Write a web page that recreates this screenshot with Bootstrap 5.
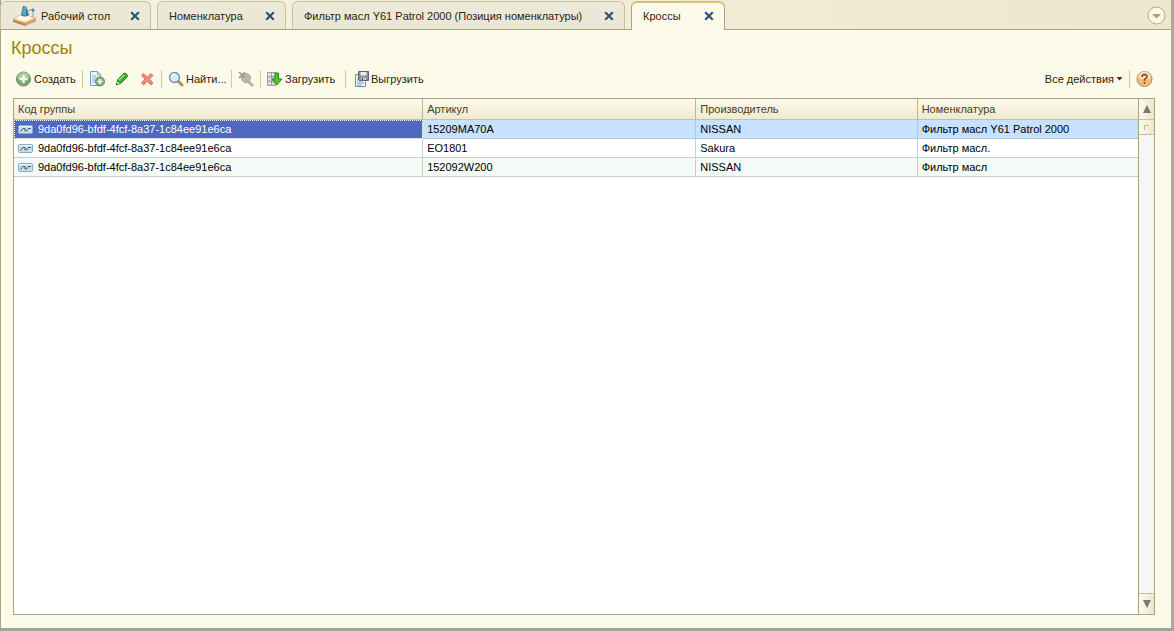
<!DOCTYPE html>
<html lang="ru">
<head>
<meta charset="utf-8">
<meta name="viewport" content="width=device-width, initial-scale=1">
<title>Кроссы</title>
<link href="https://cdn.jsdelivr.net/npm/bootstrap@5.3.0/dist/css/bootstrap.min.css" rel="stylesheet">
<style>
  :root { --line: #a9a37e; --page: #fcfae9; }
  body { font: 11px/14px "Liberation Sans", Arial, sans-serif; color: #2e2408; background: var(--page); }
  .app-window { border: 1px solid var(--line); border-width: 0 3px 3px 1px; border-right-color: #aaa99f; border-bottom-color: #a3a39c; background: var(--page); }
  .tab-strip { height: 30px; padding-top: 1px; background: linear-gradient(90deg, #f8f3de, #ede7d0); border-bottom: 1px solid var(--line); gap: 6px; }
  .doc-tab { height: 28px; padding: 0 10px 0 11px; border: 1px solid #c5c0a0; border-bottom: 0; border-radius: 6px 6px 0 0; background: linear-gradient(#edeada, #e9e6d6); }
  .doc-tab a { color: inherit; text-decoration: none; white-space: nowrap; }
  .doc-tab.current { height: 29px; margin-bottom: -1px; padding-bottom: 1px; background: var(--page); border-color: var(--line); border-top: 2px solid #d9c36b; }
  .tab-desktop { width: 151px; margin-left: -1px; }
  .tab-items { width: 129px; }
  .tab-position { width: 333px; }
  .tab-cross { width: 94px; }
  .plain { border: 0; background: none; padding: 0; color: inherit; display: inline-flex; align-items: center; white-space: nowrap; }
  .plain svg { flex: none; }
  .tab-menu { margin: 0 5px 4px auto; }
  h1 { font-size: 18px; line-height: 20px; color: #a08400; margin: 8px 0 0 10px; }
  .tool-row { margin: 11px 18px 0 14px; height: 20px; }
  .tool-row .plain { gap: 2px; height: 20px; }
  .rule { width: 1px; height: 18px; margin: 0 6px; background: #cdc8aa; flex: none; }
  .step { margin-left: 9px; }
  .b-create { width: 61px; } .b-find { width: 57px; } .b-load { width: 72px; }
  .grid-box { margin: 9px 16px 13px 12px; border: 1px solid var(--line); background: #fff; min-height: 0; }
  .cross-table { table-layout: fixed; width: 100%; margin: 0; border-collapse: separate; border-spacing: 0; color: #000; }
  .cross-table th { height: 21px; padding: 0 4px; font-weight: 400; color: #4c3e10; background: linear-gradient(#fbf9ea, #f0ead2); border-right: 1px solid #bdb68f; border-bottom: 1px solid #c5c0a0; }
  .cross-table td { height: 19px; padding: 0 4px; border-right: 1px solid #c5d0cc; border-bottom: 1px solid #c5d0cc; white-space: nowrap; overflow: hidden; }
  .cross-table th:last-child, .cross-table td:last-child { border-right: 0; }
  .cross-table tr.picked td { background: #c8e1ff; border-color: #b4c8dc; }
  .cross-table tr.picked td:first-child { background: #4f68c0; color: #fff; outline: 1px dotted #fff; outline-offset: -1px; }
  .cross-table tr.shaded td { background: #f4faf6; }
  .c-group { width: 36.4%; } .c-art { width: 24.3%; } .c-maker { width: 19.7%; }
  .row-icon { margin-right: 5px; vertical-align: -1px; }
  .scroller { width: 16px; border-left: 1px solid var(--line); background: #f8f6f2; flex: none; }
  .scroller .plain { justify-content: center; height: 21px; background: linear-gradient(90deg, #fcfaec, #ece7cc); border-bottom: 1px solid #c5c0a0; }
  .scroller .plain.down { border: 0; border-top: 1px solid #c5c0a0; }
  .thumb { height: 15px; background: linear-gradient(90deg, #fcfaec, #ece7cc); border-bottom: 1px solid #c5c0a0; }
</style>
</head>
<body>
<svg class="d-none" aria-hidden="true">
  <symbol id="cross" viewBox="0 0 10 10"><path d="M1.2 1.2 8.8 8.8M8.8 1.2 1.2 8.8" stroke="#2b5576" stroke-width="2.2"/></symbol>
  <symbol id="wave" viewBox="0 0 15 9"><rect x=".5" y=".5" width="14" height="8" rx="1" fill="#c9deed" stroke="#8ba9c0"/><path d="M1 1.5h13" stroke="#edf6fc"/><path d="M2.5 6.500 5 3.500h2v2.500h1.500l2-2.500h2.500" fill="none" stroke="#38546c"/></symbol>
</svg>
<div class="app-window d-flex flex-column min-vh-100">
  <nav class="tab-strip d-flex align-items-end" aria-label="Открытые окна">
    <div class="doc-tab tab-desktop d-flex align-items-center justify-content-between">
      <a href="#" class="d-flex align-items-center"><svg width="25" height="22" viewBox="0 0 25 22" class="me-1">
        <path d="M1 14v3l12 4 11-5v-3z" fill="#b98a58"/><path d="M1 14 10 9l14 4-11 5z" fill="#f6dfb8" stroke="#dfba84" stroke-width=".7"/><path d="m13 18 11-5v3l-11 5z" fill="#d3a36b"/><ellipse cx="12" cy="13" rx="7" ry="2.500" fill="#fff8e4"/><path d="M11 1h3l3 9q-4 3-8 0z" fill="#28799d"/><path d="M12 1h2l0 10-4-2z" fill="#59add0"/><path d="M15 6l6-2v8" fill="none" stroke="#7d9fb2" stroke-width="1"/><circle cx="21" cy="5" r="1.600" fill="#4386a8"/></svg>Рабочий стол</a>
      <button class="plain" aria-label="Закрыть"><svg width="10" height="10"><use href="#cross"/></svg></button>
    </div>
    <div class="doc-tab tab-items d-flex align-items-center justify-content-between"><a href="#">Номенклатура</a><button class="plain" aria-label="Закрыть"><svg width="10" height="10"><use href="#cross"/></svg></button></div>
    <div class="doc-tab tab-position d-flex align-items-center justify-content-between"><a href="#">Фильтр масл Y61 Patrol 2000 (Позиция номенклатуры)</a><button class="plain" aria-label="Закрыть"><svg width="10" height="10"><use href="#cross"/></svg></button></div>
    <div class="doc-tab current tab-cross d-flex align-items-center justify-content-between"><a href="#" aria-current="page">Кроссы</a><button class="plain" aria-label="Закрыть"><svg width="10" height="10"><use href="#cross"/></svg></button></div>
    <button class="plain tab-menu" aria-label="Список окон"><svg width="19" height="19" viewBox="0 0 19 19"><circle cx="9.500" cy="9.500" r="8.500" fill="#fbf8e6" stroke="#b1a878"/><path d="M5 8h9l-4.500 4.500z" fill="#aaa071"/></svg></button>
  </nav>

  <main class="d-flex flex-column flex-grow-1">
    <h1 class="fw-normal">Кроссы</h1>
    <div class="tool-row d-flex align-items-center" role="toolbar" aria-label="Действия">
      <button class="plain b-create"><svg width="17" height="16" viewBox="0 0 17 16"><circle cx="8.500" cy="8" r="7" fill="#79ad6e" stroke="#628e5c"/><path d="M2.500 7a6 6 0 0 1 12 0q-6 3-12 0" fill="#a3cb98"/><path d="M8.500 4v8m-4-4h8" stroke="#fff" stroke-width="2.400"/></svg>Создать</button>
      <span class="rule"></span>
      <button class="plain" aria-label="Скопировать"><svg width="16" height="16" viewBox="0 0 16 16"><path d="M1.500.5h7l3 3v11h-10z" fill="#eef4fb" stroke="#7a9bbd"/><path d="M8.500 1v3h3M3 5h4M3 7h6M3 9h4M3 11h4" fill="none" stroke="#91afce"/><circle cx="11" cy="10.500" r="4.500" fill="#82b577" stroke="#5d8f59"/><path d="M11 8v5m-2.500-2.500h5" stroke="#fff" stroke-width="1.600"/></svg></button>
      <button class="plain step" aria-label="Изменить"><svg width="16" height="16" viewBox="0 0 16 16"><path d="m2.500 13.500 1-4.500 6-6.500q1.500-1 3 .5t.5 3l-6.500 6.500z" fill="#35b326" stroke="#1b7c18"/><path d="m5 9 5.500-5.500" stroke="#93e67c" stroke-width="1.600"/><path d="m2.500 13.500.7-3 2.300 2.300z" fill="#f4dfa6"/><path d="m2 14 .5-1.800 1.300 1.300z" fill="#222"/></svg></button>
      <button class="plain step" aria-label="Удалить"><svg width="16" height="16" viewBox="0 0 16 16"><path d="m2.500 4.500 2-2L8.300 6 12 2.500l2 2L10.500 8l3.500 4-2 2-3.700-3.700L4.500 14l-2-2L6 8z" fill="#f28d80" stroke="#d4574c" stroke-width=".8"/></svg></button>
      <span class="rule"></span>
      <button class="plain b-find"><svg width="16" height="16" viewBox="0 0 16 16"><path d="m10 10 4 4" stroke="#b88965" stroke-width="3" stroke-linecap="round"/><circle cx="6.500" cy="6.500" r="5" fill="#d7eafa" stroke="#788baa" stroke-width="1.300"/><path d="M3.500 6a3.500 3.500 0 0 1 3.500-3" fill="none" stroke="#fff" stroke-width="1.500"/></svg>Найти...</button>
      <span class="rule"></span>
      <button class="plain" aria-label="Отменить поиск"><svg width="16" height="16" viewBox="1 0 16 16"><path d="m11 10 4 4" stroke="#b5b2a8" stroke-width="3" stroke-linecap="round"/><circle cx="9" cy="7" r="4.500" fill="#bbb8b0" stroke="#a5a39d"/><path d="m2 1 6 6m0-6L2 7" stroke="#9b9995" stroke-width="1.700"/></svg></button>
      <span class="rule"></span>
      <button class="plain b-load"><svg width="16" height="16" viewBox="1 0 16 16"><path d="M1.500 1.500h8v13h-8zM1.500 5.800h8m-8 4.400h8M5.500 1.500v13" fill="#d7d8da" stroke="#9b9da2"/><path d="M2.500 3.500h2m2 0h2m-6 4.500h2m2 0h2m-6 4.500h2" stroke="#f5f5f5"/><path d="M9 2h3.500v6H16l-5.300 6L6 8h3z" fill="#50c928" stroke="#258413"/></svg>Загрузить</button>
      <span class="rule"></span>
      <button class="plain"><svg width="17" height="16" viewBox="-2 0 17 16"><path d="M1.500 3.500h10v12h-10z" fill="#edf4fb" stroke="#728eb0"/><path d="M3 8h2m-2 2h6m-6 2h7m-7 2h5" stroke="#83a3c4"/><path d="M4.500.5h10v9h-9l-1-1z" fill="#8b8e96" stroke="#62656d"/><path d="M6.500 1h6v3.500h-6z" fill="#e9ebed"/><path d="M7 6.500h5V9H7z" fill="#c3c6ca"/><path d="M8.500 7v2" stroke="#464950"/></svg>Выгрузить</button>
      <button class="plain ms-auto">Все действия<svg width="7" height="4" viewBox="0 0 7 4"><path d="M.5 0h6l-3 3.500z" fill="#3d300e"/></svg></button>
      <span class="rule"></span>
      <button class="plain" aria-label="Справка"><svg width="17" height="18" viewBox="1 0 17 18"><circle cx="9.500" cy="9" r="7.500" fill="#f0b980" stroke="#b98a5c"/><path d="M3 8a6.500 6.500 0 0 1 13 0q-6 3-13 0" fill="#f9dbb5"/><path d="M7 7q0-2.500 2.500-2.500T12 6.800Q12 8 9.500 9.300v1.500M9.500 12v1.700" fill="none" stroke="#74471d" stroke-width="1.500"/></svg></button>
    </div>

    <div class="grid-box d-flex flex-grow-1">
      <div class="flex-grow-1">
        <table class="cross-table">
          <colgroup><col class="c-group"><col class="c-art"><col class="c-maker"><col></colgroup>
          <thead><tr><th scope="col">Код группы</th><th scope="col">Артикул</th><th scope="col">Производитель</th><th scope="col">Номенклатура</th></tr></thead>
          <tbody>
            <tr class="picked"><td><svg class="row-icon" width="15" height="9"><use href="#wave"/></svg>9da0fd96-bfdf-4fcf-8a37-1c84ee91e6ca</td><td>15209MA70A</td><td>NISSAN</td><td>Фильтр масл Y61 Patrol 2000</td></tr>
            <tr><td><svg class="row-icon" width="15" height="9"><use href="#wave"/></svg>9da0fd96-bfdf-4fcf-8a37-1c84ee91e6ca</td><td>EO1801</td><td>Sakura</td><td>Фильтр масл.</td></tr>
            <tr class="shaded"><td><svg class="row-icon" width="15" height="9"><use href="#wave"/></svg>9da0fd96-bfdf-4fcf-8a37-1c84ee91e6ca</td><td>152092W200</td><td>NISSAN</td><td>Фильтр масл</td></tr>
          </tbody>
        </table>
      </div>
      <div class="scroller d-flex flex-column">
        <button class="plain" aria-label="Вверх"><svg width="8" height="8" viewBox="0 0 8 8"><path d="M4 0 8 8H0z" fill="#7d7a76"/></svg></button>
        <div class="thumb d-flex align-items-center justify-content-center"><svg width="5" height="5" viewBox="0 0 5 5"><path d="M.5 5V.5H5" fill="none" stroke="#bdb99f"/></svg></div>
        <button class="plain down mt-auto" aria-label="Вниз"><svg width="8" height="8" viewBox="0 0 8 8"><path d="M4 8 0 0h8z" fill="#7d7a76"/></svg></button>
      </div>
    </div>
  </main>
</div>
<script src="https://cdn.jsdelivr.net/npm/bootstrap@5.3.0/dist/js/bootstrap.bundle.min.js"></script>
</body>
</html>
